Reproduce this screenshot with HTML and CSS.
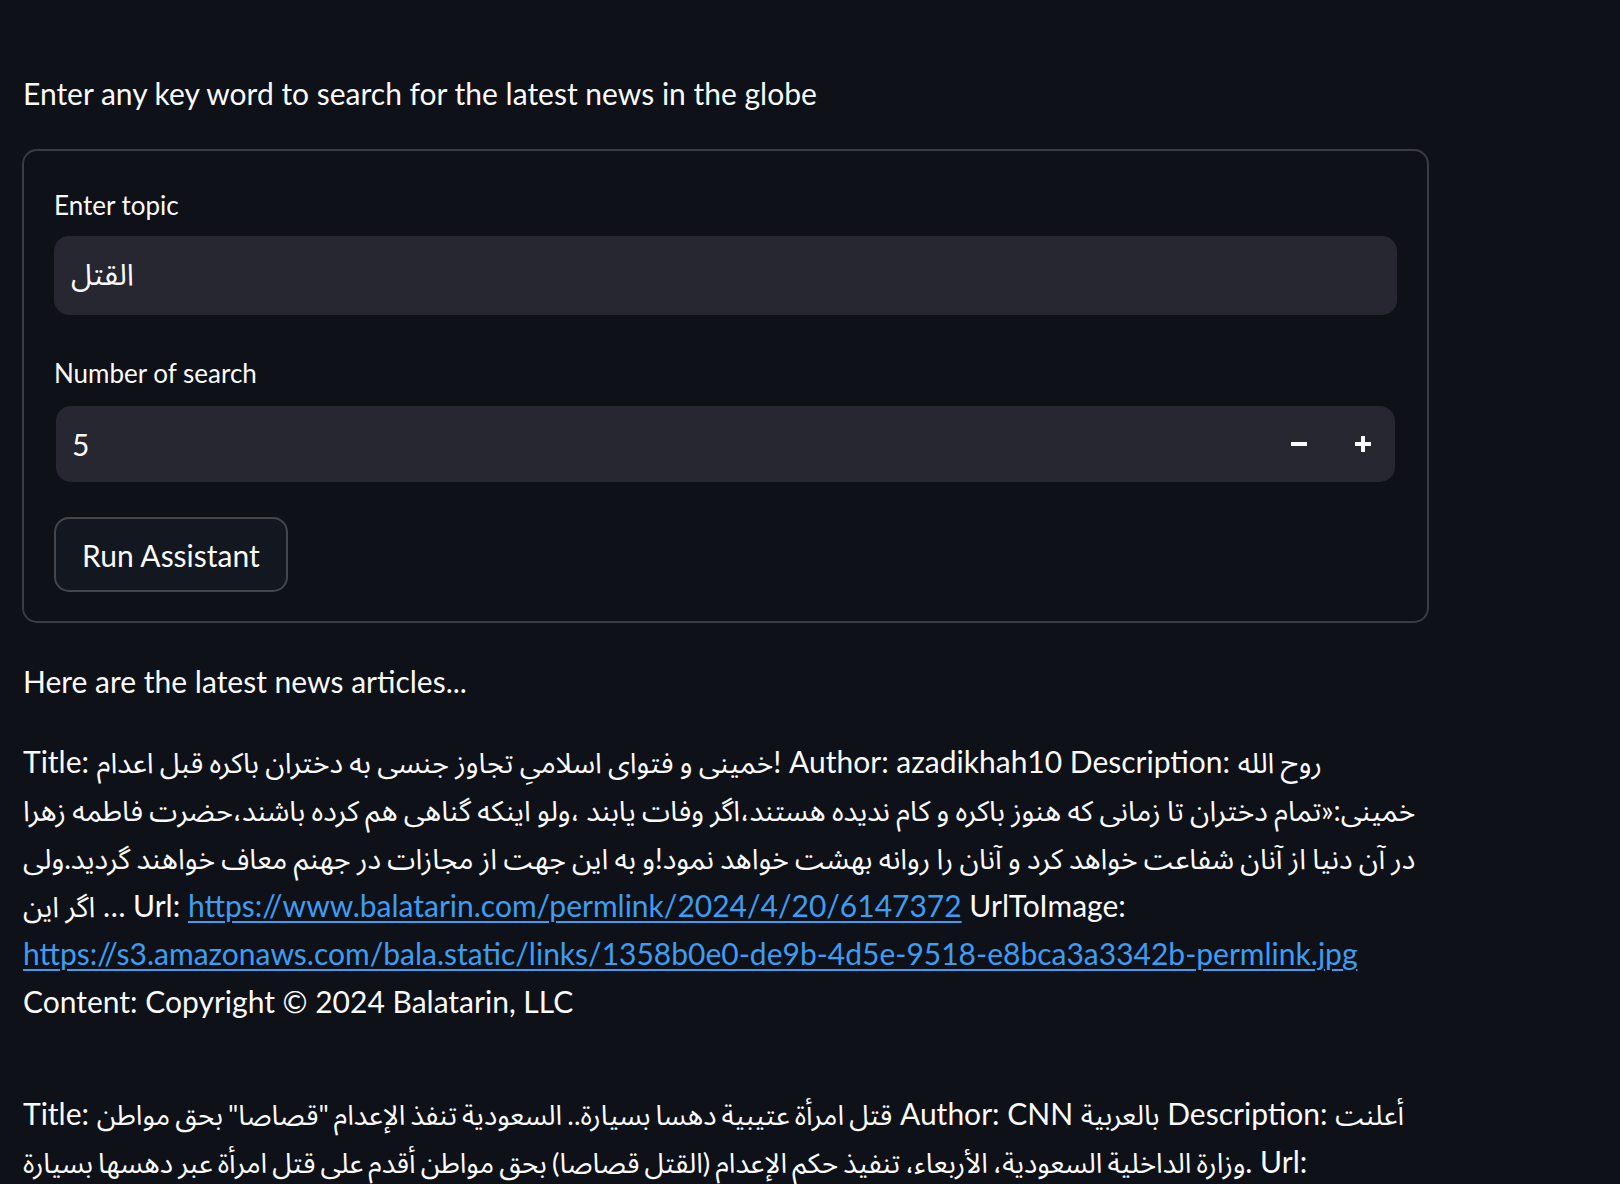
FILE: index.html
```html
<!DOCTYPE html>
<html lang="en">
<head>
<meta charset="utf-8">
<title>News Assistant</title>
<link rel="stylesheet" href="styles.css">
</head>
<body>
<main class="app">
  <p class="text">Enter any key word to search for the latest news in the globe</p>

  <form class="form">
    <div class="field">
      <label class="label" for="topic">Enter topic</label>
      <div class="input"><input id="topic" class="input-el" type="text" value="القتل"></div>
    </div>
    <div class="field">
      <label class="label" for="num">Number of search</label>
      <div class="input number">
        <input id="num" class="input-el" type="text" value="5">
        <button type="button" class="step" aria-label="Decrement">
          <svg width="16" height="16" viewBox="0 0 16 16"><rect x="0" y="6" width="16" height="4" fill="#fafafa"/></svg>
        </button>
        <button type="button" class="step" aria-label="Increment">
          <svg width="16" height="16" viewBox="0 0 16 16"><rect x="0" y="6" width="16" height="4" fill="#fafafa"/><rect x="6" y="0" width="4" height="16" fill="#fafafa"/></svg>
        </button>
      </div>
    </div>
    <div class="actions">
      <button type="button" class="btn">Run Assistant</button>
    </div>
  </form>

  <p class="text">Here are the latest news articles...</p>

  <div class="articles">
    <p class="text">Title: <span class="ar">خمینی و فتوای اسلامیِ تجاوز جنسی به دختران باکره قبل اعدام</span>! Author: azadikhah10 Description: <span class="ar">روح الله</span><br><span class="ar">خمینی:«تمام دختران تا زمانی که هنوز باکره و کام ندیده هستند،اگر وفات یابند ،ولو اینکه گناهی هم کرده باشند،حضرت فاطمه زهرا</span><br><span class="ar">در آن دنیا از آنان شفاعت خواهد کرد و آنان را روانه بهشت خواهد نمود!و به این جهت از مجازات در جهنم معاف خواهند گردید.ولی</span><br><span class="ar">اگر این</span> … Url: <a href="#">https://www.balatarin.com/permlink/2024/4/20/6147372</a> UrlToImage:<br><a href="#">https://s3.amazonaws.com/bala.static/links/1358b0e0-de9b-4d5e-9518-e8bca3a3342b-permlink.jpg</a><br>Content: Copyright © 2024 Balatarin, LLC</p>
    <p class="text text-arabic">Title: <span class="ar">قتل امرأة عتيبية دهسا بسيارة.. السعودية تنفذ الإعدام "قصاصا" بحق مواطن</span> Author: CNN <span class="ar">بالعربية</span> Description: <span class="ar">أعلنت</span><br><span class="ar">وزارة الداخلية السعودية، الأربعاء، تنفيذ حكم الإعدام (القتل قصاصا) بحق مواطن أقدم على قتل امرأة عبر دهسها بسيارة</span>. Url:</p>
  </div>
</main>
</body>
</html>
```

FILE: styles.css
```css
* { box-sizing: border-box; }

html, body {
  margin: 0;
  padding: 0;
  background: #0e1117;
  color: #fafafa;
  font-family: "Source Sans Pro", Lato, "Noto Sans Arabic", "DejaVu Sans", sans-serif;
  overflow: hidden;
}

.app {
  width: 1429px;
  padding: 69px 0 0 23px;
  display: flex;
  flex-direction: column;
  gap: 32px;
}

.text {
  margin: 0;
  font-size: 30px;
  line-height: 48px;
  color: #fafafa;
}

.text .ar {
  font-size: 28.5px;
  line-height: 1;
  word-spacing: -1px;
}

.text-arabic .ar {
  font-size: 27.8px;
  word-spacing: -2px;
}

.text a {
  color: #3d9df3;
  text-decoration: underline;
  text-decoration-thickness: 2px;
  text-underline-offset: 4px;
}

.form {
  margin: 0 0 2px -1px;
  border: 2px solid #3a3c42;
  border-radius: 15px;
  padding: 31px 30px 29px 30px;
  display: flex;
  flex-direction: column;
  gap: 35px;
}

.field {
  display: flex;
  flex-direction: column;
}

.label {
  height: 45px;
  display: flex;
  align-items: center;
  font-size: 26px;
  color: #fafafa;
  margin-bottom: 9px;
}

.field + .field .label { margin-bottom: 11px; }

.input {
  height: 79px;
  background: #262730;
  border-radius: 15px;
  display: flex;
  align-items: center;
}

.input.number {
  height: 76px;
  margin: 0 2px;
}

.input-el {
  flex: 1;
  min-width: 0;
  height: 100%;
  background: transparent;
  border: 0;
  outline: none;
  color: #fafafa;
  font-family: inherit;
  font-size: 30px;
  padding: 0 17px;
}

.input.number .input-el { padding-left: 16px; }

.step {
  width: 64px;
  height: 100%;
  background: transparent;
  border: 0;
  padding: 0;
  display: flex;
  align-items: center;
  justify-content: center;
}

.actions { display: flex; }

.btn {
  height: 75px;
  padding: 0 26px;
  background: #131720;
  border: 2px solid #44464d;
  border-radius: 15px;
  color: #fafafa;
  font-family: inherit;
  font-size: 30px;
}

.articles {
  display: flex;
  flex-direction: column;
  gap: 64px;
}
```
